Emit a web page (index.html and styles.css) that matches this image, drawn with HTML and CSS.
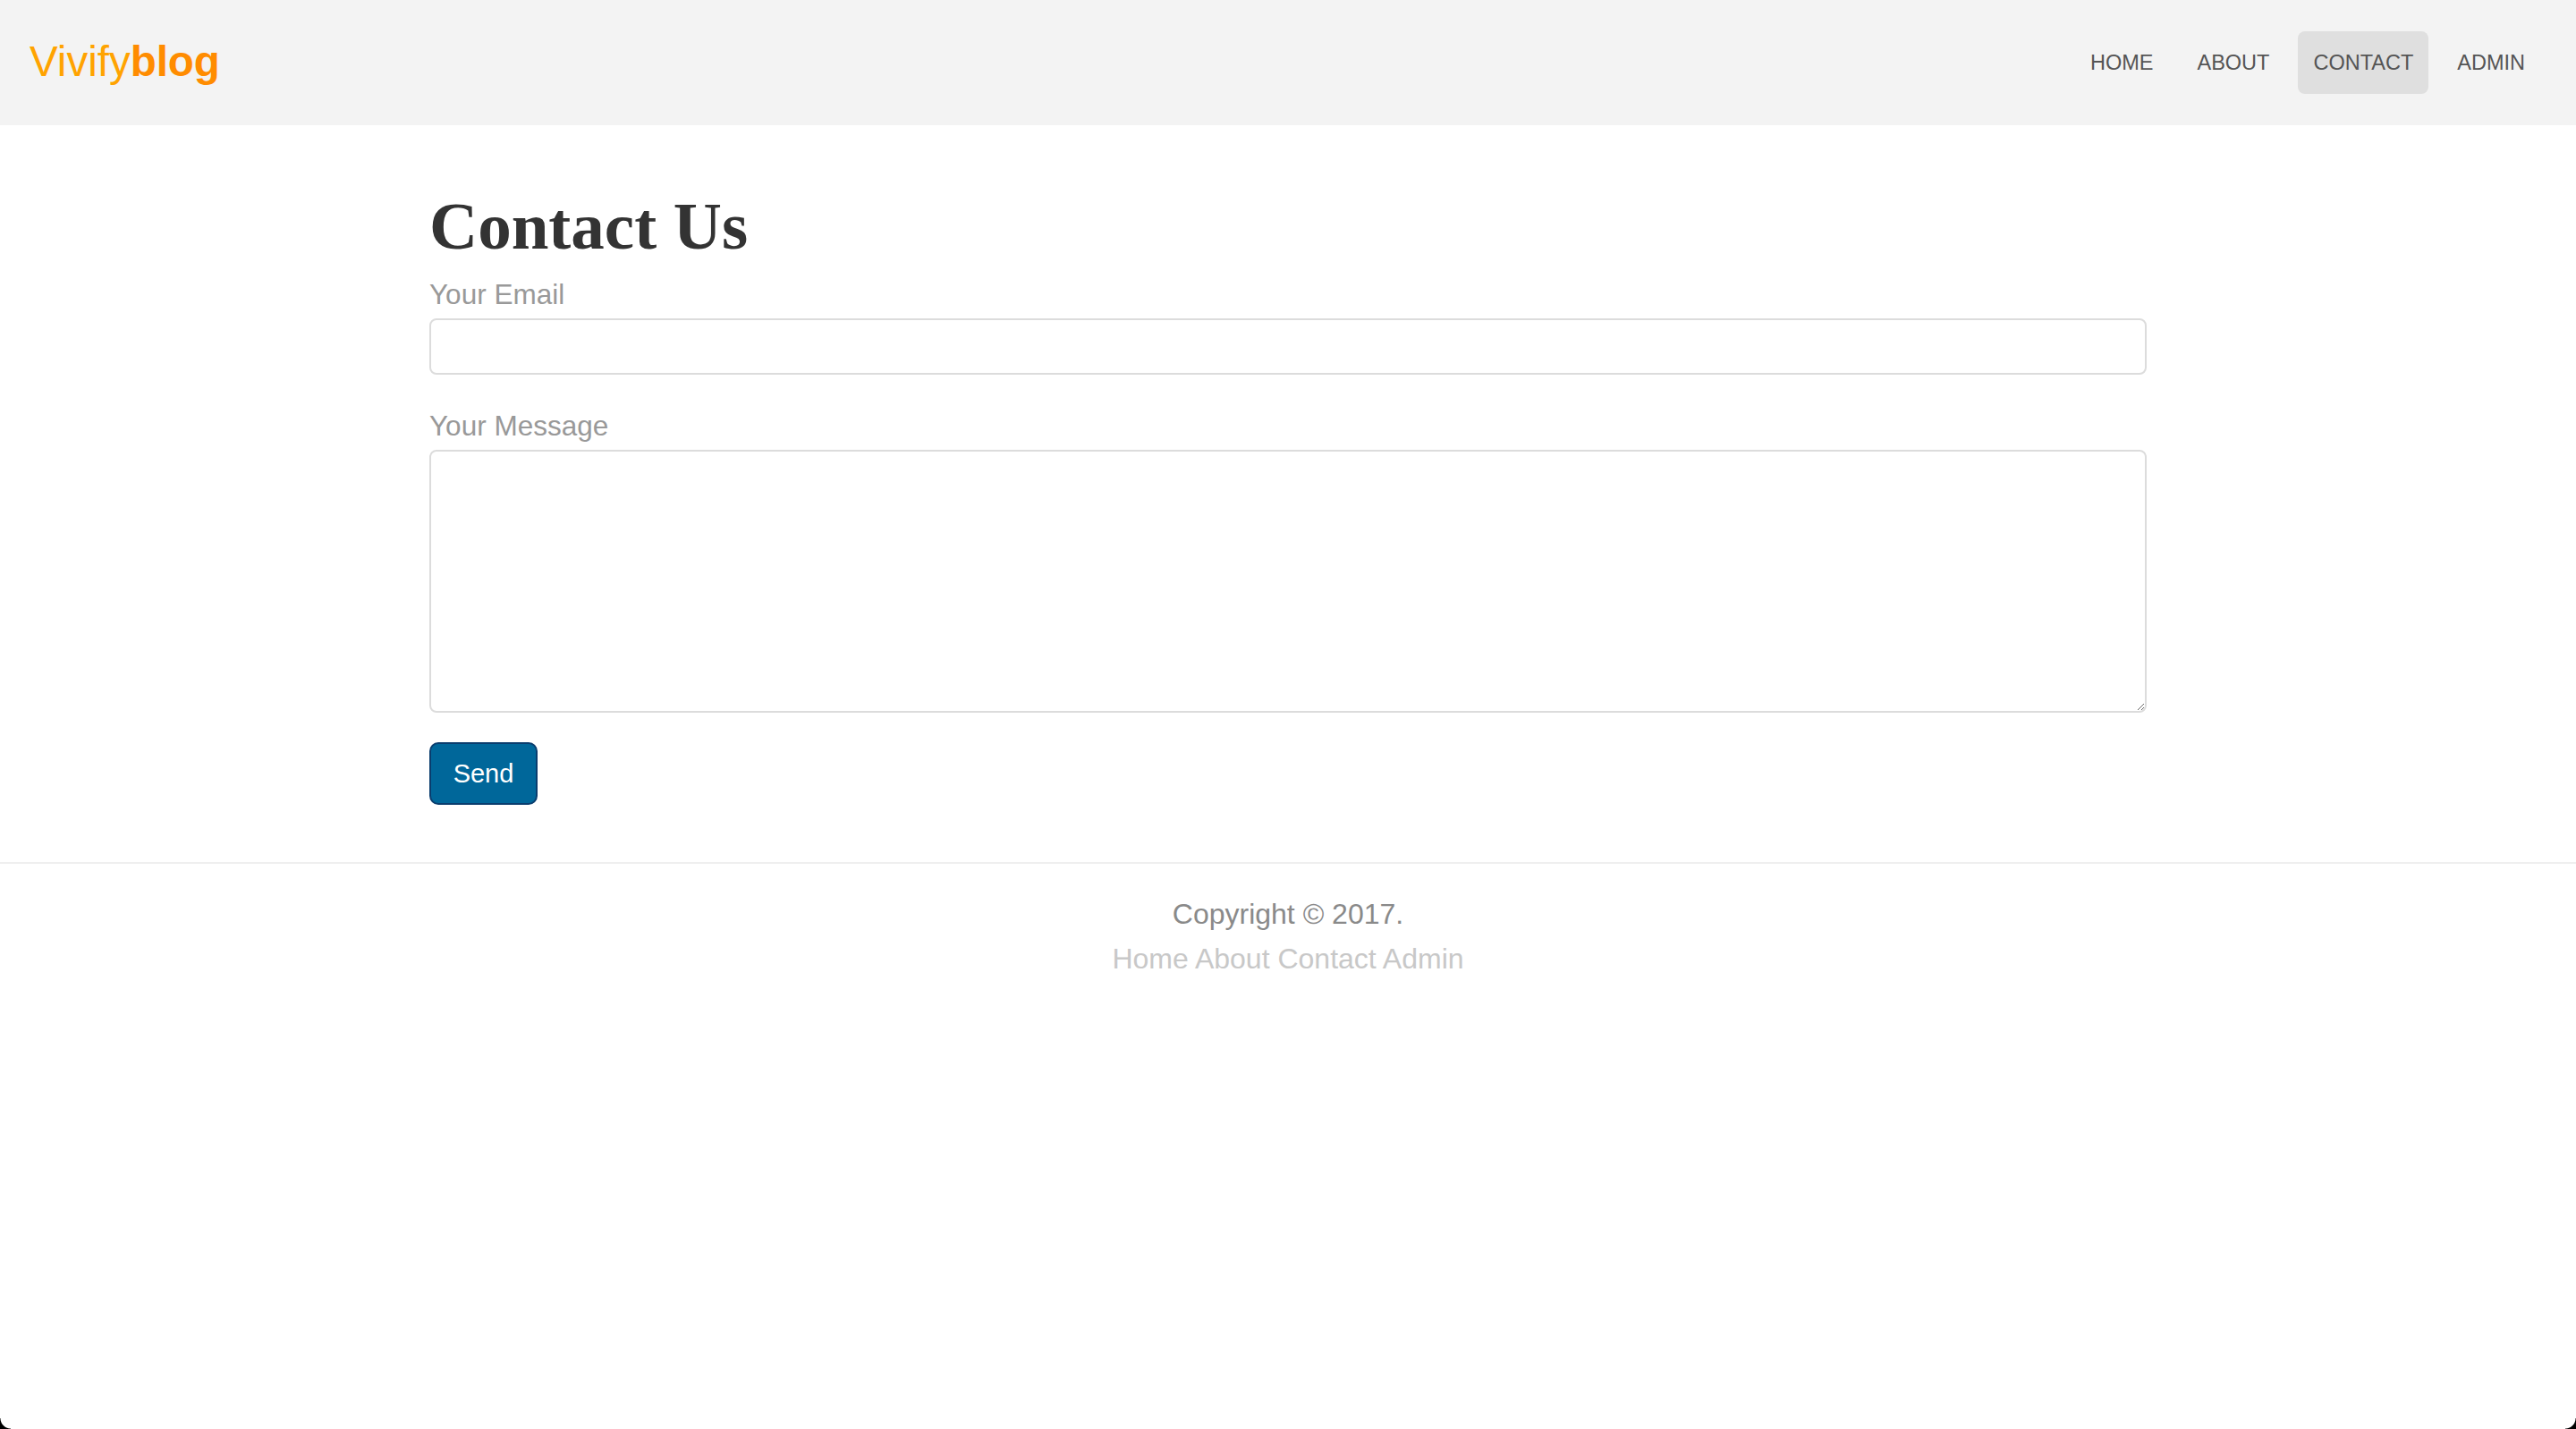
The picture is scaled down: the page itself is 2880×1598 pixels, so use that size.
FILE: index.html
```html
<!DOCTYPE html>
<html lang="en">
<head>
<meta charset="utf-8">
<title>Vivifyblog - Contact</title>
<link rel="stylesheet" href="styles.css">
</head>
<body>
<header class="topbar">
  <a class="logo" href="#"><span class="logo-light">Vivify</span><span class="logo-bold">blog</span></a>
  <nav class="nav">
    <a class="nav-item" href="#">HOME</a>
    <a class="nav-item" href="#">ABOUT</a>
    <a class="nav-item active" href="#">CONTACT</a>
    <a class="nav-item" href="#">ADMIN</a>
  </nav>
</header>
<main class="container">
  <h1 class="title">Contact Us</h1>
  <form class="contact-form">
    <label class="field-label" for="email">Your Email</label>
    <input class="field-input" id="email" type="email">
    <label class="field-label second" for="message">Your Message</label>
    <textarea class="field-textarea" id="message"></textarea>
    <button class="btn-send" type="button">Send</button>
  </form>
</main>
<footer class="footer">
  <p class="copyright">Copyright © 2017.</p>
  <p class="footer-links"><a href="#">Home</a> <a href="#">About</a> <a href="#">Contact</a> <a href="#">Admin</a></p>
</footer>
<div class="corner corner-left"></div>
<div class="corner corner-right"></div>
</body>
</html>
```
FILE: styles.css
```css
* { box-sizing: border-box; }

html, body {
  margin: 0;
  padding: 0;
  background: #ffffff;
}

body {
  font-family: "Liberation Sans", Arial, sans-serif;
  color: #333;
  min-height: 1598px;
}

a { text-decoration: none; }

.topbar {
  height: 140px;
  background: #f3f3f3;
  display: flex;
  align-items: center;
  justify-content: space-between;
  padding: 0 40px 0 33px;
}

.logo {
  font-size: 47.5px;
  line-height: 1;
  display: flex;
  align-items: baseline;
  margin-top: -3px;
}

.logo-light { color: #ffa300; font-weight: 400; }
.logo-bold { color: #ff8c00; font-weight: 700; }

.nav {
  display: flex;
  gap: 15px;
  align-items: center;
}

.nav-item {
  font-size: 23.5px;
  line-height: 70px;
  height: 70px;
  padding: 0 17px;
  color: #555;
  border-radius: 8px;
}

.nav-item.active {
  background: #dfdfdf;
}

.container {
  width: 1920px;
  margin: 0 auto;
  padding-bottom: 64px;
}

.title {
  font-family: "Liberation Serif", "Times New Roman", serif;
  font-weight: 700;
  font-size: 75px;
  line-height: 83px;
  color: #333;
  margin: 71px 0 15px;
}

.contact-form {
  display: flex;
  flex-direction: column;
  align-items: flex-start;
}

.field-label {
  display: block;
  font-size: 31.5px;
  line-height: 40px;
  color: #999;
  margin-bottom: 7px;
}

.field-label.second {
  margin-top: 37px;
}

.field-input,
.field-textarea {
  width: 100%;
  border: 2px solid #dcdcdc;
  border-radius: 8px;
  background: #fff;
  font-family: inherit;
  font-size: 28px;
  margin: 0;
}

.field-input {
  height: 63px;
}

.field-textarea {
  height: 294px;
  display: block;
  resize: vertical;
}

.btn-send {
  margin-top: 33px;
  width: 121px;
  height: 70px;
  background: #00679a;
  border: 2px solid #0a3d6e;
  border-radius: 10px;
  color: #fff;
  font-family: "Liberation Sans", Arial, sans-serif;
  font-size: 29px;
  padding: 0;
}

.footer {
  border-top: 2px solid #efefef;
  padding-top: 31px;
  text-align: center;
}

.footer p {
  margin: 0;
  font-size: 32px;
  line-height: 50px;
}

.copyright { color: #8a8a8a; }

.footer-links a { color: #c8c8c8; }

.corner {
  position: fixed;
  bottom: 0;
  width: 12px;
  height: 12px;
}

.corner-left {
  left: 0;
  background: radial-gradient(circle at 100% 0, transparent 11px, #000 12px);
}

.corner-right {
  right: 0;
  background: radial-gradient(circle at 0 0, transparent 11px, #000 12px);
}
```
